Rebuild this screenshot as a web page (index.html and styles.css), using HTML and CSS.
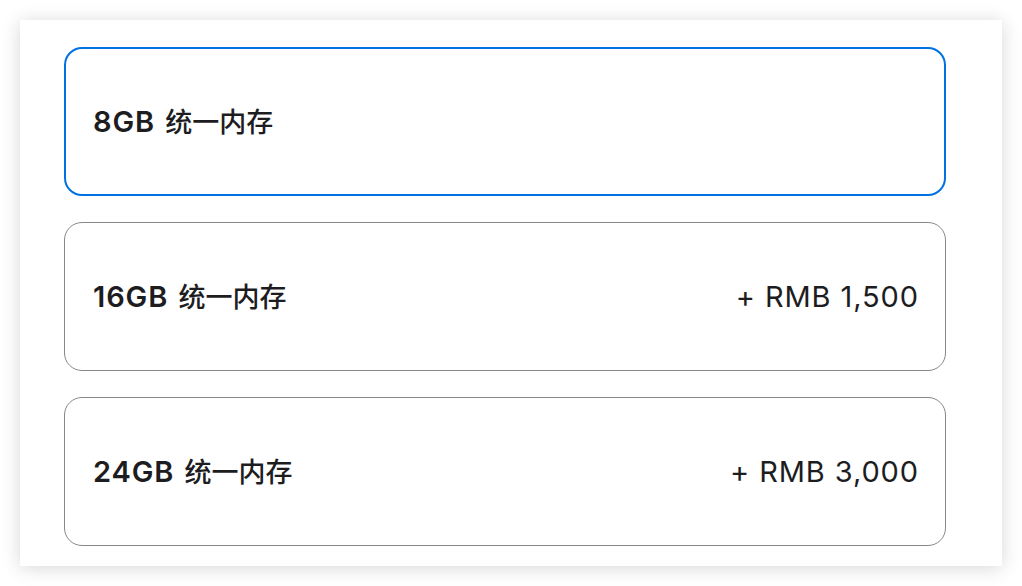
FILE: index.html
```html
<!DOCTYPE html>
<html lang="zh-CN">
<head>
<meta charset="utf-8">
<title>内存选项</title>
<link rel="stylesheet" href="styles.css">
</head>
<body>
<div class="panel">
  <div class="options">
    <div class="option selected">
      <span class="label">8GB <span class="cjk">统一内存</span></span>
    </div>
    <div class="option">
      <span class="label">16GB <span class="cjk">统一内存</span></span>
      <span class="price">+ RMB 1,500</span>
    </div>
    <div class="option">
      <span class="label">24GB <span class="cjk">统一内存</span></span>
      <span class="price">+ RMB 3,000</span>
    </div>
  </div>
</div>
</body>
</html>
```
FILE: styles.css
```css
html, body {
  margin: 0;
  padding: 0;
  background: #ffffff;
}
body {
  padding: 20px;
  font-family: Inter, "Noto Sans CJK SC", sans-serif;
  color: #1d1d1f;
}
.panel {
  width: 982px;
  height: 546px;
  box-sizing: border-box;
  background: #ffffff;
  padding: 27px 56px 20px 44px;
  box-shadow: 0 2px 18px rgba(0, 0, 0, 0.16);
}
.options {
  display: flex;
  flex-direction: column;
  gap: 26px;
}
.option {
  height: 149px;
  box-sizing: border-box;
  border: 1px solid #86868b;
  border-radius: 18px;
  display: flex;
  align-items: center;
  justify-content: space-between;
  padding: 0 26px 0 28px;
}
.option.selected {
  border: 2px solid #0071e3;
  padding: 0 27px;
}
.label {
  font-size: 29px;
  font-weight: 600;
  line-height: 36px;
  letter-spacing: 0.9px;
  word-spacing: 2px;
}
.cjk {
  font-family: "Noto Sans CJK SC", sans-serif;
  font-size: 27px;
  font-weight: 500;
  letter-spacing: 0;
}
.price {
  font-size: 29px;
  font-weight: 400;
  line-height: 36px;
  letter-spacing: 0.9px;
}
```
